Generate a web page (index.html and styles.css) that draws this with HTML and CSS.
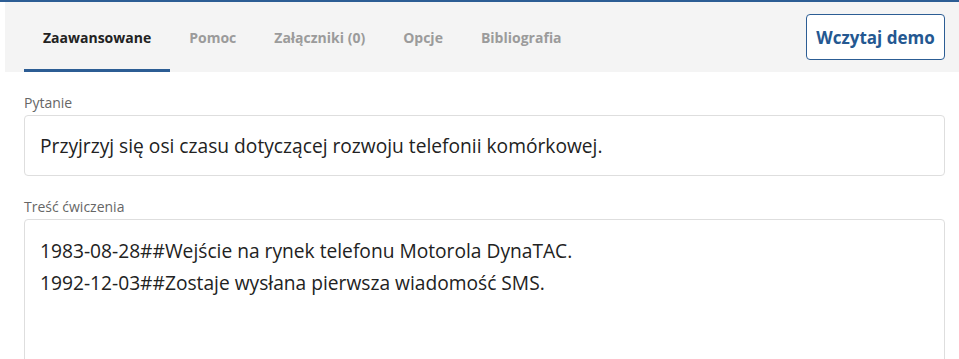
FILE: index.html
```html
<!DOCTYPE html>
<html lang="pl">
<head>
<meta charset="utf-8">
<link rel="stylesheet" href="styles.css">
</head>
<body>
<div class="page">
  <div class="topbar">
    <nav class="tabs">
      <a class="tab active">Zaawansowane</a>
      <a class="tab">Pomoc</a>
      <a class="tab">Załączniki (0)</a>
      <a class="tab">Opcje</a>
      <a class="tab">Bibliografia</a>
    </nav>
    <button class="demo">Wczytaj demo</button>
  </div>
  <div class="content">
    <div class="field">
      <label class="label">Pytanie</label>
      <div class="input">Przyjrzyj się osi czasu dotyczącej rozwoju telefonii komórkowej.</div>
    </div>
    <div class="field">
      <label class="label">Treść ćwiczenia</label>
      <div class="textarea">1983-08-28##Wejście na rynek telefonu Motorola DynaTAC.<br>1992-12-03##Zostaje wysłana pierwsza wiadomość SMS.</div>
    </div>
  </div>
</div>
</body>
</html>
```

FILE: styles.css
```css
* { box-sizing: border-box; }
html, body { margin: 0; padding: 0; background: #fff; overflow: hidden; }
body { font-family: "Open Sans", "Liberation Sans", sans-serif; color: #222; }
.page { border-top: 2px solid #2c5d94; }
.topbar {
  margin-left: 5px;
  height: 70px;
  background: #f4f4f4;
  display: flex;
  align-items: center;
  justify-content: space-between;
  padding: 0 14px 0 19px;
}
.tabs { display: flex; height: 100%; }
.tab {
  display: flex;
  align-items: center;
  padding: 0 19px;
  font-size: 14px;
  font-weight: 700;
  color: #9b9b9b;
  border-bottom: 3px solid transparent;
  padding-top: 3px;
}
.tab.active { color: #222; border-bottom-color: #2c5d94; }
.demo {
  width: 139px;
  height: 46px;
  border: 1px solid #2c5d94;
  border-radius: 4px;
  background: #fff;
  color: #245891;
  font-family: inherit;
  font-size: 17px;
  font-weight: 700;
  padding: 0;
}
.content { padding: 20px 14px 0 24px; }
.field { margin-bottom: 20px; }
.label {
  display: block;
  font-size: 14px;
  line-height: 20px;
  color: #666;
  padding-top: 1px;
  margin-bottom: 2px;
}
.input {
  border: 1px solid #dedede;
  border-radius: 4px;
  height: 61px;
  padding: 16px 15px 0;
  font-size: 19.2px;
  line-height: 28.8px;
}
.textarea {
  border: 1px solid #dedede;
  border-radius: 4px;
  height: 200px;
  padding: 15px 15px;
  font-size: 19.2px;
  line-height: 32px;
}
```
